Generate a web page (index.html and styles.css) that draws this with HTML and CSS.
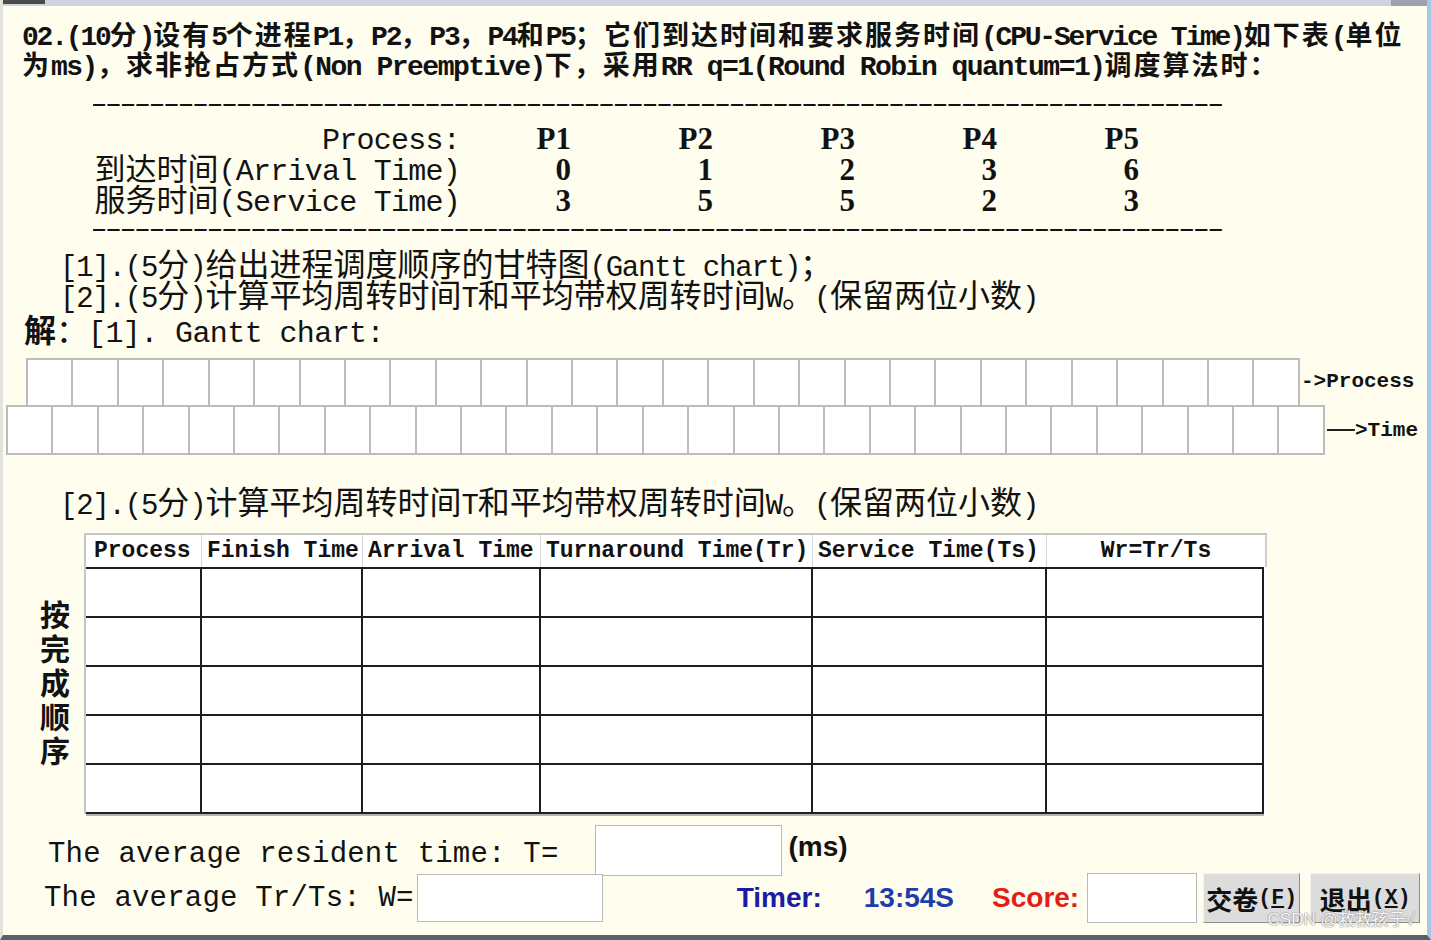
FILE: index.html
```html
<!DOCTYPE html>
<html lang="zh-CN">
<head>
<meta charset="utf-8">
<title>RR 调度算法</title>
<link rel="stylesheet" href="styles.css">
</head>
<body>
<div class="win">
  <div class="topbar"><span class="tb-frag"></span><span class="tb-btn"></span></div>
  <div class="content">
    <div class="q">
      <div class="ln ln1"><span class="m">02.(10</span>分<span class="m">)</span>设有<span class="m">5</span>个进程<span class="m">P1</span>，<span class="m">P2</span>，<span class="m">P3</span>，<span class="m">P4</span>和<span class="m">P5</span>；它们到达时间和要求服务时间<span class="m">(CPU-Service Time)</span>如下表<span class="m">(</span>单位</div>
      <div class="ln ln2">为<span class="m">ms)</span>，求非抢占方式<span class="m">(Non Preemptive)</span>下，采用<span class="m">RR q=1(Round Robin quantum=1)</span>调度算法时：</div>
    </div>
    <div class="dash">——————————————————————————————————————————————————————————————————————————————</div>
    <div class="ptab">
      <div class="pl"><span class="m">Process:</span></div><div class="pv">P1</div><div class="pv">P2</div><div class="pv">P3</div><div class="pv">P4</div><div class="pv">P5</div>
      <div class="pl">到达时间<span class="m">(Arrival Time)</span></div><div class="pv">0</div><div class="pv">1</div><div class="pv">2</div><div class="pv">3</div><div class="pv">6</div>
      <div class="pl">服务时间<span class="m">(Service Time)</span></div><div class="pv">3</div><div class="pv">5</div><div class="pv">5</div><div class="pv">2</div><div class="pv">3</div>
    </div>
    <div class="dash d2">——————————————————————————————————————————————————————————————————————————————</div>
    <div class="subs">
      <div class="sl"><span class="m">[1].(5</span>分<span class="m">)</span>给出进程调度顺序的甘特图<span class="m">(Gantt chart)</span>；</div>
      <div class="sl"><span class="m">[2].(5</span>分<span class="m">)</span>计算平均周转时间<span class="m">T</span>和平均带权周转时间<span class="m">W</span>。<span class="m">(</span>保留两位小数<span class="m">)</span></div>
    </div>
    <div class="sol"><b>解</b>：<span class="m">[1]. Gantt chart:</span></div>
    <div class="gantt">
      <div class="grow g1">
        <div class="cells">
          <span></span><span></span><span></span><span></span><span></span><span></span><span></span><span></span><span></span><span></span>
          <span></span><span></span><span></span><span></span><span></span><span></span><span></span><span></span><span></span><span></span>
          <span></span><span></span><span></span><span></span><span></span><span></span><span></span><span></span>
        </div>
        <span class="glab">-&gt;Process</span>
      </div>
      <div class="grow g2">
        <div class="cells">
          <span></span><span></span><span></span><span></span><span></span><span></span><span></span><span></span><span></span><span></span>
          <span></span><span></span><span></span><span></span><span></span><span></span><span></span><span></span><span></span><span></span>
          <span></span><span></span><span></span><span></span><span></span><span></span><span></span><span></span><span></span>
        </div>
        <span class="glab"><span class="arr"></span>&gt;Time</span>
      </div>
    </div>
    <div class="sl sl2"><span class="m">[2].(5</span>分<span class="m">)</span>计算平均周转时间<span class="m">T</span>和平均带权周转时间<span class="m">W</span>。<span class="m">(</span>保留两位小数<span class="m">)</span></div>
    <div class="tsec">
      <div class="vlab">按完成顺序</div>
      <div class="tbl">
        <div class="thead">
          <div class="th th1">Process</div>
          <div class="th">Finish Time</div>
          <div class="th">Arrival Time</div>
          <div class="th">Turnaround Time(Tr)</div>
          <div class="th">Service Time(Ts)</div>
          <div class="th thl">Wr=Tr/Ts</div>
        </div>
        <div class="tbody">
          <span></span><span></span><span></span><span></span><span></span><span></span>
          <span></span><span></span><span></span><span></span><span></span><span></span>
          <span></span><span></span><span></span><span></span><span></span><span></span>
          <span></span><span></span><span></span><span></span><span></span><span></span>
          <span></span><span></span><span></span><span></span><span></span><span></span>
        </div>
      </div>
    </div>
    <div class="avg">
      <div class="arow r1">
        <span class="atxt">The average resident time: T=</span>
        <span class="box b1"></span>
        <span class="ms">(ms)</span>
      </div>
      <div class="arow r2">
        <span class="atxt">The average Tr/Ts: W=</span>
        <span class="box b2"></span>
        <span class="timer">Timer:</span>
        <span class="tval">13:54S</span>
        <span class="score">Score:</span>
        <span class="box b3"></span>
        <button class="btn bt1">交卷<span class="m">(<u>F</u>)</span></button>
        <button class="btn bt2">退出<span class="m">(<u>X</u>)</span></button>
      </div>
    </div>
  </div>
  <div class="wm">CSDN @救救孩子√</div>
</div>
</body>
</html>
```

FILE: styles.css
```css
* { box-sizing: border-box; margin: 0; padding: 0; }
html, body { width: 1431px; height: 940px; overflow: hidden; background: #fefdee; }
body { font-family: "Noto Sans CJK SC", "Liberation Sans", sans-serif; color: #121212; }

.win {
  position: relative;
  width: 1431px;
  height: 940px;
  display: flex;
  flex-direction: column;
  background: #fefdee;
  border-left: 3px solid #e2e2de;
  border-right: 4px solid #a6c6ec;
  border-bottom: 5px solid #59606a;
}
.topbar { height: 6px; flex: none; background: #cdd4de; display: flex; justify-content: space-between; }
.tb-frag { width: 42px; height: 4px; background: #4a4a4a; }
.tb-btn { width: 36px; height: 6px; background: #9ca3ad; }

.content { display: flex; flex-direction: column; align-items: flex-start; flex: 1; }
.m { font-family: "Liberation Mono", monospace; }

/* question text */
.q { margin: 13px 0 0 19px; }
.ln { height: 30px; line-height: 30px; font-size: 27px; letter-spacing: 2px; font-weight: 700; white-space: nowrap; }
.ln .m { font-size: 28px; letter-spacing: -2.2px; }
.ln2 .m { letter-spacing: -1.5px; }

.dash {
  margin: 14px 0 0 90px;
  width: 1132px;
  height: 24px;
  line-height: 24px;
  overflow: hidden;
  white-space: nowrap;
  font-family: "Liberation Mono", monospace;
  font-size: 20px;
  letter-spacing: 2.5px;
  font-weight: 700;
}
.d2 { margin-top: 2px; }

/* process data */
.ptab {
  margin: 6px 0 0 90px;
  display: grid;
  grid-template-columns: 367px 111px repeat(4, 142px);
  grid-auto-rows: 31px;
  line-height: 31px;
  white-space: nowrap;
}
.pl { text-align: right; font-size: 31px; margin-top: -3px; }
.pl .m { font-size: 30px; letter-spacing: -0.75px; }
.pv { text-align: right; font-family: "Liberation Serif", serif; font-weight: 700; font-size: 31px; }

/* sub questions */
.subs { margin: 5px 0 0 57px; }
.sl { height: 31px; line-height: 31px; font-size: 32px; white-space: nowrap; }
.sl .m { font-size: 29px; letter-spacing: -1.2px; }
.sol { margin: 3px 0 0 21px; height: 32px; line-height: 32px; font-size: 32px; white-space: nowrap; }
.sol b { font-weight: 700; }
.sol .m { font-size: 30px; letter-spacing: -0.6px; }

/* gantt */
.gantt { margin-top: 14px; display: flex; flex-direction: column; align-items: flex-start; }
.grow { display: flex; align-items: center; }
.g1 { margin-left: 23px; }
.g2 { margin-left: 3px; }
.cells { display: flex; background: #fff; border: 2px solid #bcbcbc; border-right: 0; }
.g1 .cells { width: 1274px; height: 47px; border-bottom: 0; }
.g2 .cells { width: 1319px; height: 50px; }
.cells span { flex: 1; border-right: 2px solid #bcbcbc; }
.glab { font-family: "Liberation Mono", monospace; font-weight: 700; font-size: 21px; white-space: nowrap; display: flex; align-items: center; }
.g1 .glab { margin-left: 1px; }
.arr { display: block; width: 28px; height: 2px; background: #222; margin-left: 2px; }

.sl2 { margin: 30px 0 0 57px; }

/* result table */
.tsec { margin-top: 17px; display: flex; align-items: flex-start; }
.vlab {
  margin-left: 37px;
  width: 30px;
  padding-top: 67px;
  writing-mode: vertical-rl;
  font-size: 30px;
  line-height: 30px;
  letter-spacing: 4px;
  font-weight: 700;
}
.tbl { margin-left: 14px; width: 1183px; background: #fff; border-left: 2px solid #c6c6c6; border-top: 2px solid #c6c6c6; }
.thead {
  display: grid;
  grid-template-columns: 116px 161px 178px 272px 234px 1fr;
  height: 32px;
  border-right: 2px solid #cdcdcd;
}
.th {
  font-family: "Liberation Mono", monospace;
  font-weight: 700;
  font-size: 23px;
  line-height: 32px;
  white-space: nowrap;
  border-right: 1px solid #d6d6d6;
  padding-left: 5px;
}
.th1 { padding-left: 8px; }
.thl { border-right: 0; text-align: center; padding-left: 0; }
.tbody {
  display: grid;
  grid-template-columns: 116px 161px 178px 272px 234px 1fr;
  grid-auto-rows: 49px;
  width: 1178px;
  border-top: 2px solid #1e1e1e;
  border-right: 2px solid #1e1e1e;
  box-shadow: 0 2px 0 #b4b4b4;
}
.tbody span { border-right: 2px solid #1e1e1e; border-bottom: 2px solid #1e1e1e; }
.tbody span:nth-child(6n) { border-right: 0; }

/* averages and controls */
.avg { margin-top: 11px; display: flex; flex-direction: column; align-items: flex-start; }
.arow { display: flex; align-items: center; }
.r1 { height: 51px; margin-left: 45px; }
.r2 { height: 50px; margin-left: 41px; margin-top: -3px; }
.atxt { font-family: "Liberation Mono", monospace; font-size: 29px; letter-spacing: 0.2px; white-space: nowrap; }
.r1 .atxt { margin-top: 8px; }
.box { display: block; background: #fff; border: 1px solid #b9b9b9; }
.b1 { width: 187px; height: 51px; margin-left: 37px; }
.b2 { width: 186px; height: 48px; margin-left: 3px; }
.b3 { width: 110px; height: 50px; margin-left: 8px; }
.ms { font-family: "Liberation Sans", sans-serif; font-weight: 700; font-size: 28px; margin: 0 0 8px 6px; }
.timer, .tval, .score { font-family: "Liberation Sans", sans-serif; font-weight: 700; font-size: 28px; }
.timer { color: #1b1ba3; margin-left: 134px; }
.tval { color: #1f3cab; margin-left: 42px; }
.score { color: #e51d16; margin-left: 38px; }
.btn {
  height: 50px;
  background: #dcdcdc;
  border: 1px solid;
  border-color: #f2f2f2 #8e8e8e #8e8e8e #f2f2f2;
  font-family: "Noto Sans CJK SC", sans-serif;
  font-weight: 700;
  font-size: 26px;
  color: #111;
  display: flex;
  align-items: center;
  justify-content: center;
  white-space: nowrap;
  padding: 0;
}
.btn .m { font-size: 21.5px; }
.bt1 { width: 97px; margin-left: 6px; }
.bt2 { width: 110px; margin-left: 10px; }

.wm {
  position: absolute;
  right: 12px;
  bottom: 5px;
  font-family: "Liberation Sans", "Noto Sans CJK SC", sans-serif;
  font-size: 17px;
  line-height: 20px;
  color: #f7f7f7;
  text-shadow: 0 0 1px #777, 0 0 2px #999;
}
```
